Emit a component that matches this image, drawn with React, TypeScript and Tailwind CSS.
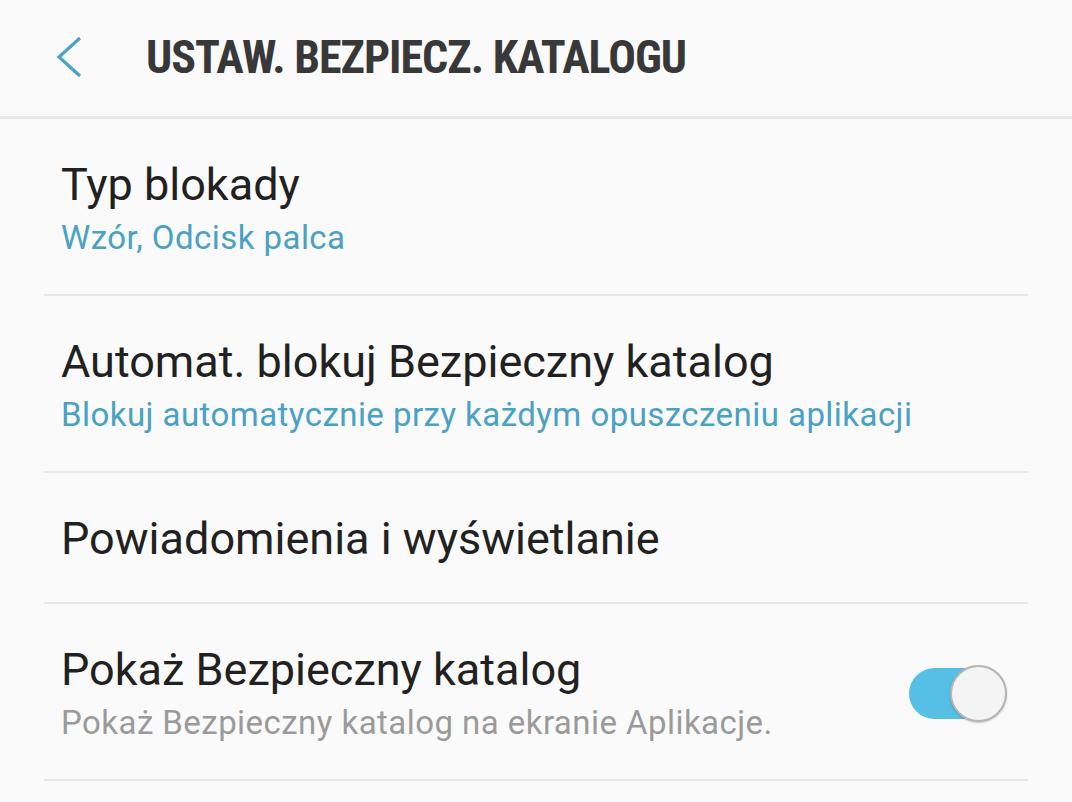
const rows = [
  { title: "Typ blokady", sub: "Wzór, Odcisk palca", tone: "blue" },
  { title: "Automat. blokuj Bezpieczny katalog", sub: "Blokuj automatycznie przy każdym opuszczeniu aplikacji", tone: "blue" },
  { title: "Powiadomienia i wyświetlanie" },
  { title: "Pokaż Bezpieczny katalog", sub: "Pokaż Bezpieczny katalog na ekranie Aplikacje.", tone: "gray", toggle: true },
];

function Toggle() {
  return (
    <div className="relative w-[98px] h-[57px] shrink-0">
      <div className="absolute left-0 top-[3px] w-[88px] h-[51px] rounded-full bg-[#56bfe5]" />
      <div className="absolute right-0 top-0 w-[57px] h-[57px] rounded-full bg-[#f4f4f4] border-2 border-[#b5b5b5] shadow-[0_1px_2px_rgba(0,0,0,0.2)]" />
    </div>
  );
}

export default function App() {
  return (
    <div className="w-[1072px] h-[802px] overflow-hidden bg-[#fafafa] font-['Roboto',sans-serif]">
      <header className="h-[119px] flex items-center border-b-[3px] border-[#e8e8e8]">
        <svg className="ml-[55px] w-[28px] h-[42px] mt-[-2px]" viewBox="0 0 28 42" fill="none">
          <path d="M25 2 L4 21 L25 40" stroke="#4ba3c7" strokeWidth="3.2" />
        </svg>
        <h1 className="ml-[63px] text-[#383838] font-bold text-[46px] leading-none tracking-[-1px] font-['Roboto_Condensed','Liberation_Sans_Narrow','DejaVu_Sans_Condensed',sans-serif] [font-stretch:condensed] mt-[-2px]">
          USTAW. BEZPIECZ. KATALOGU
        </h1>
      </header>
      <div className="mx-[44px]">
        {rows.map((r) => (
          <div
            key={r.title}
            className={`flex items-center border-b-2 border-[#e6e6e6] pl-[17px] pr-[21px] ${r.sub ? "pt-[40px] pb-[36px]" : "pt-[40px] pb-[37px]"}`}
          >
            <div className="flex-1">
              <div className="text-[45px] leading-[52px] text-[#212121]">{r.title}</div>
              {r.sub && (
                <div
                  className={`mt-[7px] text-[33px] leading-[40px] tracking-[0.45px] ${r.tone === "blue" ? "text-[#4aa1c4]" : "text-[#9a9a9a]"}`}
                >
                  {r.sub}
                </div>
              )}
            </div>
            {r.toggle && <Toggle />}
          </div>
        ))}
      </div>
    </div>
  );
}
